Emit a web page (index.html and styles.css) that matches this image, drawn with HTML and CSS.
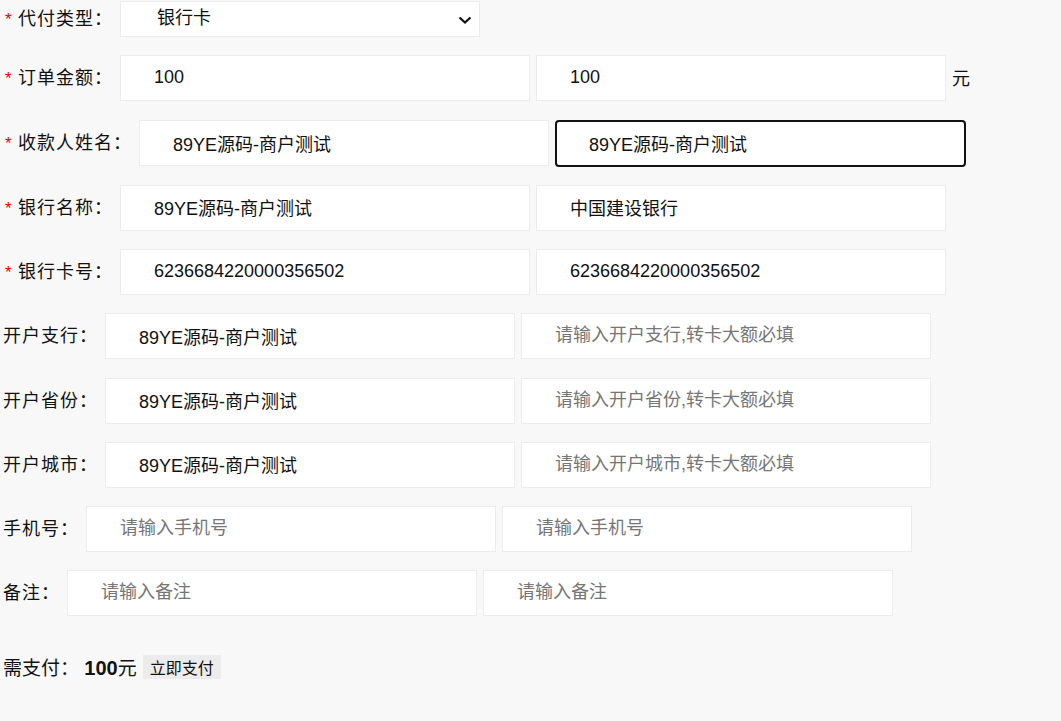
FILE: index.html
```html
<!DOCTYPE html>
<html lang="zh-CN">
    <head>
        <meta charset="UTF-8" />
        <meta name="viewport" content="width=device-width, initial-scale=1.0" />
        <title>代付下单</title>
        <link rel="stylesheet" href="styles.css">
    </head>
    <body>
        <form class="pay-form" id="pay-form">
            <div class="row">
                <label class="lbl"><span class="star">*</span>代付类型：</label>
                <div class="select-wrap">
                    <select class="field select" name="type">
                        <option>银行卡</option>
                    </select>
                    <svg class="chev" width="14" height="8" viewBox="0 0 14 8"><path d="M1.5 1.5 L7 6.5 L12.5 1.5" fill="none" stroke="#111" stroke-width="2.2"/></svg>
                </div>
            </div>

            <div class="row">
                <label class="lbl"><span class="star">*</span>订单金额：</label>
                <input class="field" type="text" value="100" />
                <input class="field" type="text" value="100" />
                <span class="unit">元</span>
            </div>

            <div class="row">
                <label class="lbl"><span class="star">*</span>收款人姓名：</label>
                <input class="field" type="text" value="89YE源码-商户测试" />
                <input class="field focused" type="text" value="89YE源码-商户测试" />
            </div>

            <div class="row">
                <label class="lbl"><span class="star">*</span>银行名称：</label>
                <input class="field" type="text" value="89YE源码-商户测试" />
                <input class="field" type="text" value="中国建设银行" />
            </div>

            <div class="row">
                <label class="lbl"><span class="star">*</span>银行卡号：</label>
                <input class="field" type="text" value="6236684220000356502" />
                <input class="field" type="text" value="6236684220000356502" />
            </div>

            <div class="row">
                <label class="lbl">开户支行：</label>
                <input class="field" type="text" value="89YE源码-商户测试" />
                <input class="field" type="text" placeholder="请输入开户支行,转卡大额必填" />
            </div>

            <div class="row">
                <label class="lbl">开户省份：</label>
                <input class="field" type="text" value="89YE源码-商户测试" />
                <input class="field" type="text" placeholder="请输入开户省份,转卡大额必填" />
            </div>

            <div class="row">
                <label class="lbl">开户城市：</label>
                <input class="field" type="text" value="89YE源码-商户测试" />
                <input class="field" type="text" placeholder="请输入开户城市,转卡大额必填" />
            </div>

            <div class="row">
                <label class="lbl">手机号：</label>
                <input class="field" type="text" placeholder="请输入手机号" />
                <input class="field" type="text" placeholder="请输入手机号" />
            </div>

            <div class="row">
                <label class="lbl">备注：</label>
                <input class="field" type="text" placeholder="请输入备注" />
                <input class="field" type="text" placeholder="请输入备注" />
            </div>

            <div class="total">
                需支付： <b>100</b>元<button type="submit" class="pay-btn">立即支付</button>
            </div>
        </form>
    </body>
</html>
```

FILE: styles.css
```css
body {
    margin: 0;
    background-color: #f8f8f8;
    font-family: "Liberation Sans", "Noto Sans CJK SC", sans-serif;
    color: #111;
}

.pay-form {
    padding: 1px 0 0 3px;
}

.row {
    display: flex;
    align-items: center;
    gap: 6px;
    margin-bottom: 18.25px;
}

.lbl {
    font-size: 18px;
    letter-spacing: 1px;
    white-space: nowrap;
    margin-right: 1px;
    padding-bottom: 4px;
}

.star {
    display: inline-block;
    width: 15px;
    padding-left: 2px;
    box-sizing: border-box;
    color: #e00;
    font-size: 17px;
    letter-spacing: 0;
}

.field {
    box-sizing: border-box;
    width: 410px;
    height: 46px;
    padding: 0 10px 1px 33px;
    border: 1px solid #ececec;
    border-radius: 0;
    background: #fff;
    font-family: "Liberation Sans", "Noto Sans CJK SC", sans-serif;
    font-size: 18px;
    color: #111;
    outline: none;
}

.field::placeholder {
    color: #767676;
}

.field.focused {
    width: 411px;
    height: 47px;
    border: 2px solid #111;
    border-radius: 4px;
    padding-left: 32px;
}

.select-wrap {
    position: relative;
}

.select {
    -webkit-appearance: none;
    appearance: none;
    width: 360px;
    height: 36px;
    padding-left: 36px;
    padding-bottom: 2px;
}

.chev {
    position: absolute;
    right: 8px;
    top: 15px;
    pointer-events: none;
}

.unit {
    font-size: 18px;
    padding-bottom: 2px;
}

.total {
    margin-top: 37px;
    font-size: 19px;
}

.total b {
    font-size: 20px;
}

.pay-btn {
    border: none;
    background-color: #ececec;
    font-family: "Liberation Sans", "Noto Sans CJK SC", sans-serif;
    font-size: 16px;
    color: #111;
    height: 24px;
    padding: 0 7px;
    margin-left: 6px;
    vertical-align: 1px;
    cursor: pointer;
}
```
